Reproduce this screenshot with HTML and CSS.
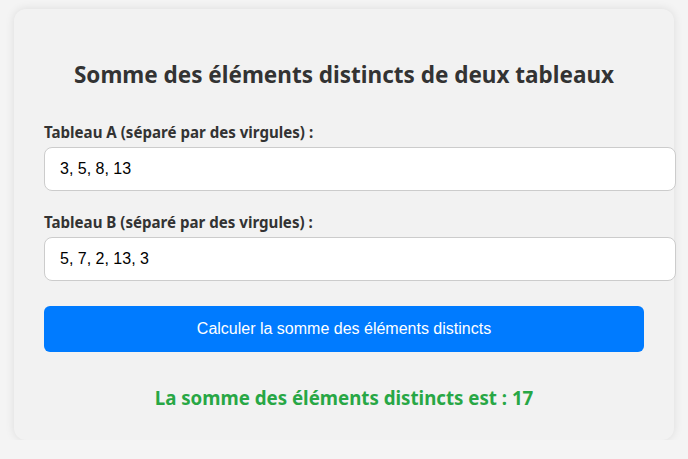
FILE: index.html
```html
<!DOCTYPE html>
<html lang="fr">
<head>
<meta charset="utf-8">
<title>Somme des éléments distincts</title>
<link rel="stylesheet" href="styles.css">
</head>
<body>
<div class="container">
  <h2 class="title">Somme des éléments distincts de deux tableaux</h2>
  <div class="form-group">
    <label class="label" for="a">Tableau A (séparé par des virgules) :</label>
    <input class="field" id="a" type="text" value="3, 5, 8, 13">
  </div>
  <div class="form-group">
    <label class="label" for="b">Tableau B (séparé par des virgules) :</label>
    <input class="field" id="b" type="text" value="5, 7, 2, 13, 3">
  </div>
  <button class="btn" type="button">Calculer la somme des éléments distincts</button>
  <div class="result">La somme des éléments distincts est : 17</div>
</div>
</body>
</html>
```

FILE: styles.css
```css
html, body {
  margin: 0;
  padding: 0;
}
body {
  background: #f4f4f4;
  font-family: "Noto Sans", "Open Sans", sans-serif;
  color: #333;
  padding-top: 9px;
}
.container {
  width: 600px;
  margin: 0 auto;
  padding: 30px 30px 29px;
  background: #f2f2f2;
  border-radius: 12px;
  box-shadow: 0 0 10px rgba(0, 0, 0, 0.1);
}
.title {
  margin: 21px 0 33px;
  text-align: center;
  font-size: 22.5px;
  line-height: 30px;
  font-weight: 700;
  color: #333;
}
.form-group {
  margin-bottom: 22px;
}
.label {
  display: block;
  font-size: 15.1px;
  line-height: 19px;
  font-weight: 700;
  margin-bottom: 5px;
}
.field {
  display: block;
  width: 600px;
  padding: 12px 15px;
  font-family: "Liberation Sans", Arial, sans-serif;
  font-size: 16px;
  line-height: 18px;
  border: 1px solid #ccc;
  border-radius: 8px;
  background: #fff;
  color: #000;
  outline: none;
}
.btn {
  display: block;
  width: 100%;
  margin-top: 25px;
  padding: 13px 0 14px;
  font-family: "Liberation Sans", Arial, sans-serif;
  font-size: 16px;
  line-height: 19px;
  color: #fff;
  background: #007bff;
  border: none;
  border-radius: 6px;
}
.result {
  margin-top: 33px;
  text-align: center;
  font-size: 18.7px;
  line-height: 26px;
  font-weight: 700;
  color: #28a745;
}
```
